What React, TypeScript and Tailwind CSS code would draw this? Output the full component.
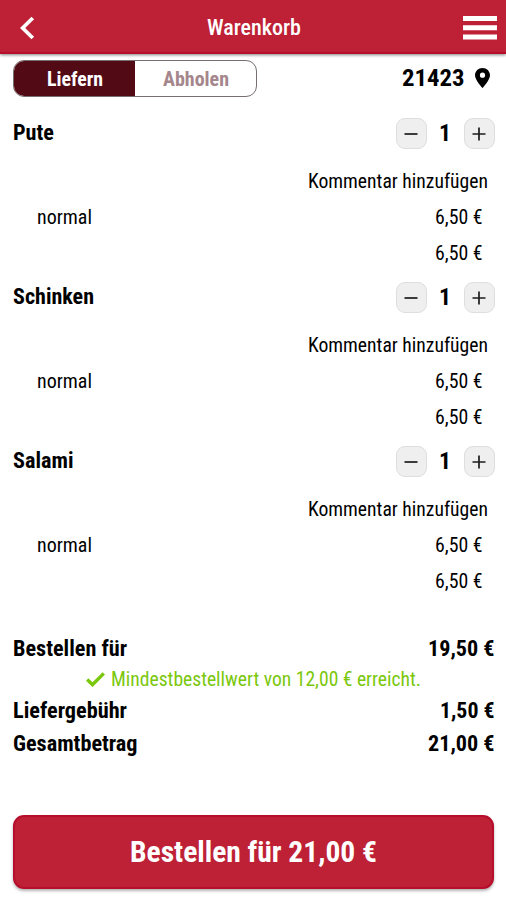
import { useLayoutEffect, useRef, useState } from "react";

type TextProps = { children: string; width: number; className?: string };

// Single-line condensed label: squeezes its glyphs to the given width.
function Text({ children, width, className = "" }: TextProps) {
  const ref = useRef<HTMLSpanElement>(null);
  const [scale, setScale] = useState(1);
  useLayoutEffect(() => {
    if (ref.current) setScale(width / ref.current.getBoundingClientRect().width * scale);
  }, [width]);
  return (
    <span className={`flex shrink-0 whitespace-nowrap ${className}`} style={{ width }}>
      <span ref={ref} className="block shrink-0 origin-left" style={{ transform: `scaleX(${scale})` }}>
        {children}
      </span>
    </span>
  );
}

const items = [
  { name: "Pute", width: 41 },
  { name: "Schinken", width: 81 },
  { name: "Salami", width: 60.5 },
];

function StepButton({ plus = false }: { plus?: boolean }) {
  return (
    <button className="flex size-[31px] items-center justify-center rounded-[9px] border border-[#dedede] bg-[#efefef]">
      <svg width="14" height="14" viewBox="0 0 14 14" fill="none" stroke="#1c1c1c" strokeWidth="1.7">
        <path d={plus ? "M.5 7h13M7 .5v13" : "M.5 7h13"} />
      </svg>
    </button>
  );
}

function Item({ name, width }: { name: string; width: number }) {
  return (
    <section className="h-[164px]">
      <div className="flex h-[31px] items-center justify-between pl-[12.5px] pr-[11.5px]">
        <Text width={width} className="pb-[2px] text-[21.5px] font-bold">{name}</Text>
        <div className="flex items-center">
          <StepButton />
          <div className="flex w-[37px] justify-center">
            <Text width={12} className="text-[23px] font-bold">1</Text>
          </div>
          <StepButton plus />
        </div>
      </div>
      <div className="mt-[14px] flex h-[37px] items-center justify-end pr-[18.5px]">
        <Text width={180} className="text-[19.5px]">Kommentar hinzufügen</Text>
      </div>
      <div className="flex h-[36px] items-center justify-between pl-[36.5px] pr-[23.5px]">
        <Text width={55} className="text-[19.5px]">normal</Text>
        <Text width={47.5} className="text-[19.5px]">6,50 €</Text>
      </div>
      <div className="flex h-[35px] items-center justify-end pr-[23.5px]">
        <Text width={47.5} className="text-[19.5px]">6,50 €</Text>
      </div>
    </section>
  );
}

function Total({ label, labelWidth, value, valueWidth }: { label: string; labelWidth: number; value: string; valueWidth: number }) {
  return (
    <div className="flex h-[33px] items-center justify-between pl-[12.5px] pr-[11.5px] text-[21.5px] font-bold">
      <Text width={labelWidth}>{label}</Text>
      <Text width={valueWidth}>{value}</Text>
    </div>
  );
}

export default function App() {
  return (
    <div className="flex h-[900px] w-[506px] flex-col overflow-hidden bg-white font-['Roboto_Condensed',Roboto,sans-serif] leading-none text-black [font-stretch:75%]">
      <header className="flex h-[54px] shrink-0 items-center justify-between border-b-2 border-[#b60e2c] bg-[#be2135] pl-5 pr-[9px] pt-[3px] shadow-[0_1px_3px_rgba(0,0,0,0.5)]">
        <svg width="25" height="24" viewBox="0 0 25 24" fill="none" stroke="#fff" strokeWidth="3.8">
          <path d="M12.8 2 2.6 12l10.2 10" />
        </svg>
        <Text width={94} className="text-[22.5px] font-medium text-white">Warenkorb</Text>
        <svg width="34" height="24" viewBox="0 0 34 24" fill="#fff">
          <path d="M0 0h34v5H0zM0 9.2h34v5H0zM0 18.4h34v5H0z" />
        </svg>
      </header>

      <div className="mt-[6px] flex h-[37px] shrink-0 items-center justify-between pl-[13px] pr-[16px]">
        <div className="flex h-[37px] w-[244px] overflow-hidden rounded-[11px] border border-[#776f70]">
          <div className="flex w-[121px] items-center justify-center bg-[#520b15] pt-[2px]">
            <Text width={56} className="text-[21px] font-bold text-white">Liefern</Text>
          </div>
          <div className="flex flex-1 items-center justify-center pt-[2px]">
            <Text width={66} className="text-[21px] font-bold text-[#a5868c]">Abholen</Text>
          </div>
        </div>
        <div className="flex items-center gap-[11px]">
          <Text width={62.5} className="text-[24.5px] font-bold">21423</Text>
          <svg className="mb-px" width="15" height="20" viewBox="0 0 15 20">
            <path fillRule="evenodd" d="M7.5 0C3.3 0 0 3.2 0 7.2 0 12.2 7.5 20 7.5 20S15 12.2 15 7.2C15 3.2 11.7 0 7.5 0Zm0 4.6a2.6 2.6 0 1 1 0 5.2 2.6 2.6 0 0 1 0-5.2Z" />
          </svg>
        </div>
      </div>

      <main className="mt-[21px] shrink-0">
        {items.map((item) => (
          <Item key={item.name} {...item} />
        ))}
      </main>

      <div className="mt-[22px] shrink-0">
        <Total label="Bestellen für" labelWidth={114} value="19,50 €" valueWidth={66.5} />
        <div className="flex h-[29px] items-center justify-center gap-[6px] text-[#7ac70c]">
          <svg width="19" height="15" viewBox="0 0 19 15" fill="none" stroke="currentColor" strokeWidth="3.4">
            <path d="m1.2 7.5 5.3 5.2L17.8 1.4" />
          </svg>
          <Text width={310} className="pt-px text-[19.5px]">Mindestbestellwert von 12,00 € erreicht.</Text>
        </div>
        <Total label="Liefergebühr" labelWidth={114} value="1,50 €" valueWidth={54.5} />
        <Total label="Gesamtbetrag" labelWidth={124.5} value="21,00 €" valueWidth={66.5} />
      </div>

      <button className="mx-[12.5px] mt-[55px] flex h-[74px] shrink-0 items-center justify-center rounded-[11px] border-2 border-[#b60e2c] bg-[#be2135] shadow-[0_2px_3px_rgba(0,0,0,0.3)]">
        <Text width={247} className="ml-[1px] text-[30px] font-bold text-white">Bestellen für 21,00 €</Text>
      </button>
    </div>
  );
}
